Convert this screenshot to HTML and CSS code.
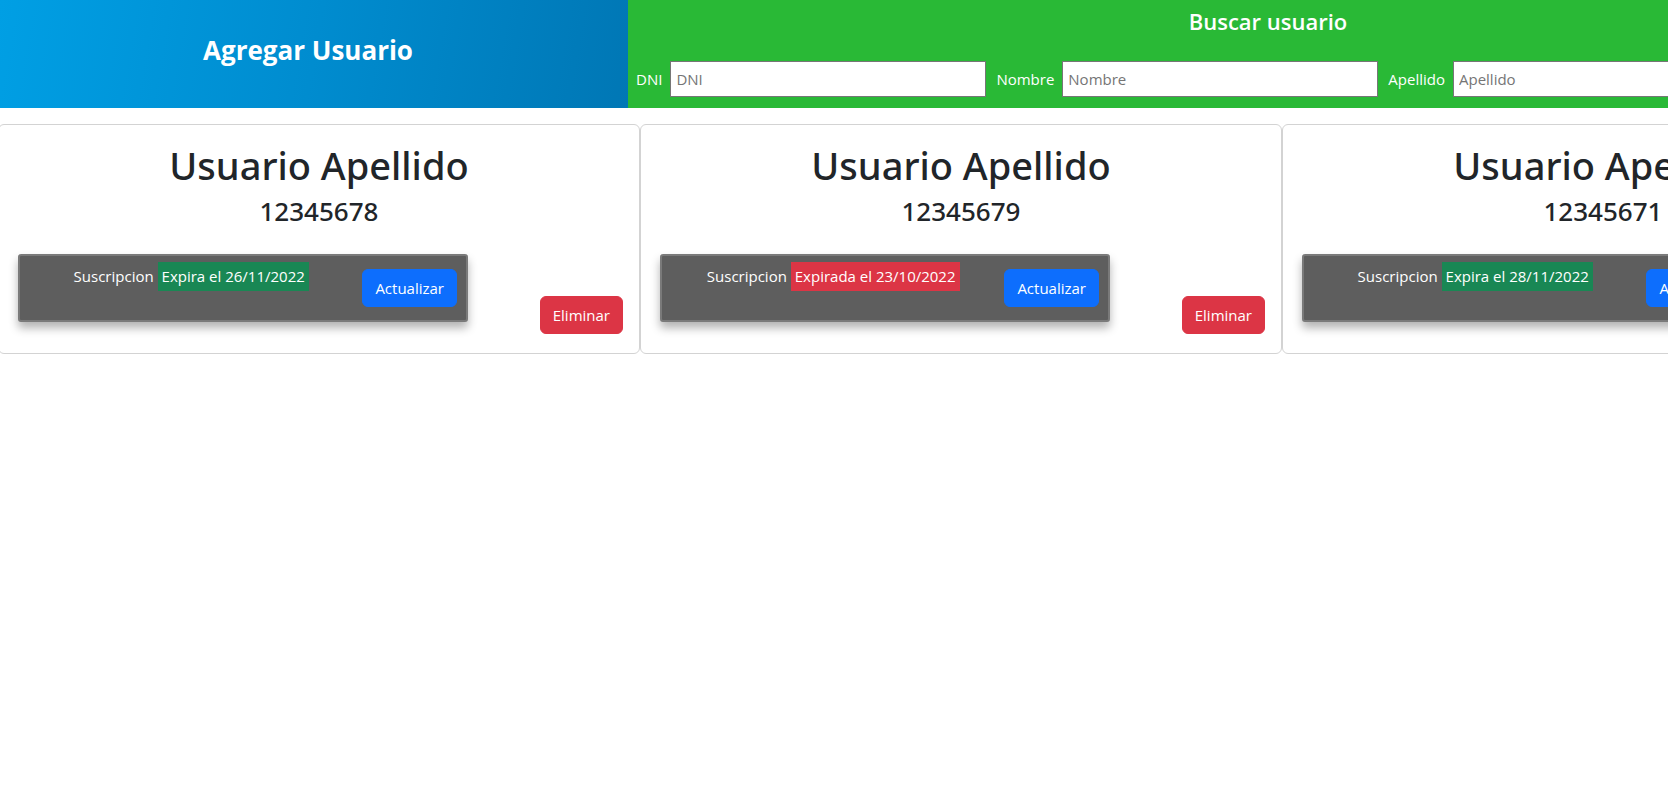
FILE: index.html
```html
<!DOCTYPE html>
<html lang="es">
<head>
<meta charset="utf-8">
<title>Usuarios</title>
<link rel="stylesheet" href="styles.css">
</head>
<body>
<div class="page">
  <header class="top">
    <div class="add">
      <h3 class="add-title">Agregar Usuario</h3>
    </div>
    <div class="search">
      <h4 class="search-title">Buscar usuario</h4>
      <form class="search-fields">
        <label class="field-label" for="dni">DNI</label>
        <input class="field-input" id="dni" type="text" placeholder="DNI">
        <label class="field-label" for="nombre">Nombre</label>
        <input class="field-input" id="nombre" type="text" placeholder="Nombre">
        <label class="field-label" for="apellido">Apellido</label>
        <input class="field-input" id="apellido" type="text" placeholder="Apellido">
      </form>
    </div>
  </header>

  <main class="cards">
    <article class="card">
      <h1 class="card-name">Usuario Apellido</h1>
      <h3 class="card-dni">12345678</h3>
      <div class="card-foot">
        <div class="sub">
          <div class="sub-info"><span class="sub-label">Suscripcion</span> <span class="badge badge-ok">Expira el 26/11/2022</span></div>
          <button class="btn btn-blue" type="button">Actualizar</button>
        </div>
        <button class="btn btn-red" type="button">Eliminar</button>
      </div>
    </article>

    <article class="card">
      <h1 class="card-name">Usuario Apellido</h1>
      <h3 class="card-dni">12345679</h3>
      <div class="card-foot">
        <div class="sub">
          <div class="sub-info"><span class="sub-label">Suscripcion</span> <span class="badge badge-expired">Expirada el 23/10/2022</span></div>
          <button class="btn btn-blue" type="button">Actualizar</button>
        </div>
        <button class="btn btn-red" type="button">Eliminar</button>
      </div>
    </article>

    <article class="card">
      <h1 class="card-name">Usuario Apellido</h1>
      <h3 class="card-dni">12345671</h3>
      <div class="card-foot">
        <div class="sub">
          <div class="sub-info"><span class="sub-label">Suscripcion</span> <span class="badge badge-ok">Expira el 28/11/2022</span></div>
          <button class="btn btn-blue" type="button">Actualizar</button>
        </div>
        <button class="btn btn-red" type="button">Eliminar</button>
      </div>
    </article>
  </main>
</div>
</body>
</html>
```

FILE: styles.css
```css
html, body {
  margin: 0;
  padding: 0;
  overflow: hidden;
  background: #fff;
}

body {
  font-family: "Open Sans", "Noto Sans", "Liberation Sans", sans-serif;
  font-size: 16px;
  line-height: 1.5;
  color: #212529;
}

.page {
  width: 1926px;
}

/* ---------- header ---------- */
.top {
  display: flex;
  width: 1908px;
  height: 108px;
}

.add {
  width: 628px;
  flex: 0 0 628px;
  display: flex;
  align-items: center;
  justify-content: center;
  background: linear-gradient(100deg, #009fe4 0%, #008ccf 50%, #0077b5 100%);
}

.add-title {
  margin: 0 12px 6px 0;
  color: #fff;
  font-size: 26px;
  font-weight: 700;
  line-height: 1.2;
}

.search {
  flex: 1 1 auto;
  background: #29b936;
  color: #fff;
  padding-top: 8px;
  box-sizing: border-box;
}

.search-title {
  margin: 0;
  text-align: center;
  font-size: 22px;
  font-weight: 600;
  line-height: 1.2;
}

.search-fields {
  display: flex;
  align-items: center;
  gap: 8px;
  margin-top: 27px;
  padding-left: 8px;
}

.field-label {
  font-size: 15px;
  color: #fff;
}

.field-input {
  box-sizing: border-box;
  width: 316px;
  height: 36px;
  margin: 0 2px 0 0;
  padding: 1px 5px;
  border: 1px solid #767676;
  border-radius: 0;
  background: #fff;
  font-family: "Open Sans", "Noto Sans", sans-serif;
  font-size: 15px;
  color: #212529;
}

.field-input::placeholder {
  color: #757575;
}

/* ---------- cards ---------- */
.cards {
  display: flex;
  margin: 16px 0 0 -2px;
}

.card {
  box-sizing: border-box;
  flex: 0 0 642px;
  width: 642px;
  height: 230px;
  padding: 16px 16px 19px;
  border: 1px solid #d3d3d3;
  border-radius: 6px;
  display: flex;
  flex-direction: column;
}

.card-name {
  margin: 2px 0 7px;
  text-align: center;
  font-family: "Noto Sans", "Open Sans", sans-serif;
  font-size: 38px;
  font-weight: 500;
  line-height: 1.2;
}

.card-dni {
  margin: 0;
  text-align: center;
  font-family: "Noto Sans", "Open Sans", sans-serif;
  font-size: 26px;
  font-weight: 500;
  line-height: 1.2;
}

.card-foot {
  margin-top: auto;
  display: flex;
  justify-content: space-between;
  align-items: flex-end;
}

.sub {
  box-sizing: border-box;
  width: 450px;
  height: 68px;
  margin: 0 0 12px 3px;
  padding: 6px 9px 6px 0;
  display: flex;
  align-items: center;
  background: #5e5e5e;
  border: 2px solid #7a7a7a;
  border-radius: 3px;
  box-shadow: 0 6px 10px rgba(0, 0, 0, 0.3);
}

.sub-info {
  flex: 1 1 auto;
  align-self: flex-start;
  text-align: center;
  color: #fff;
  font-size: 15px;
  line-height: 21px;
}

.sub-label {
  color: #fff;
}

.badge {
  display: inline-block;
  padding: 4px 4px;
  color: #fff;
}

.badge-ok {
  background: #198754;
}

.badge-expired {
  background: #dc3545;
}

.btn {
  box-sizing: border-box;
  height: 38px;
  padding: 0 12px;
  border: 1px solid transparent;
  border-radius: 6px;
  color: #fff;
  font-family: "Open Sans", "Noto Sans", sans-serif;
  font-size: 15px;
  line-height: 1.5;
  cursor: pointer;
}

.btn-blue {
  background: #0d6efd;
  border-color: #0d6efd;
}

.btn-red {
  background: #dc3545;
  border-color: #dc3545;
}
```
